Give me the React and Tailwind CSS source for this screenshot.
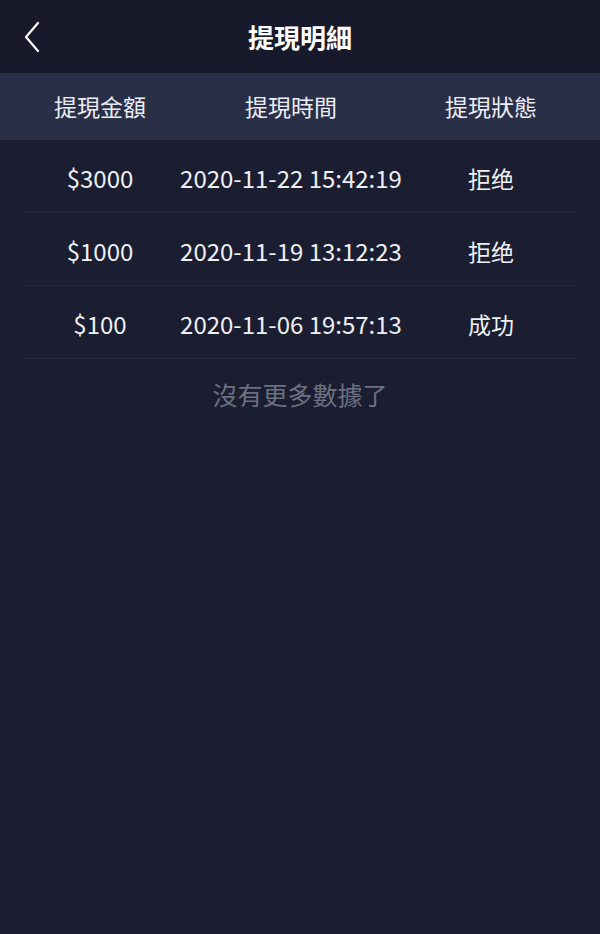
const rows = [
  { amount: '$3000', time: '2020-11-22 15:42:19', status: '拒绝' },
  { amount: '$1000', time: '2020-11-19 13:12:23', status: '拒绝' },
  { amount: '$100', time: '2020-11-06 19:57:13', status: '成功' },
];

const font = { fontFamily: '"Noto Sans CJK TC", "Noto Sans CJK SC", sans-serif' };

export default function App() {
  return (
    <div className="min-h-[934px] w-[600px] bg-[#1b1e30] text-white" style={font}>
      <div className="relative flex h-[73px] items-center justify-center bg-[#181a2c]">
        <button className="absolute left-[20px] top-[17px] p-1">
          <svg width="16" height="32" viewBox="0 0 16 32" fill="none">
            <path d="M14 2 L2 16 L14 30" stroke="#ffffff" strokeWidth="2.2" strokeLinecap="round" strokeLinejoin="round" />
          </svg>
        </button>
        <h1 className="text-[26px] font-bold">提現明細</h1>
      </div>

      <div className="flex h-[67px] items-center bg-[#2a2f48] px-6 text-[23px] text-[#eceef4]">
        <div className="w-[152px] text-center">提現金額</div>
        <div className="w-[230px] text-center">提現時間</div>
        <div className="w-[170px] text-center">提現狀態</div>
      </div>

      <div className="px-6">
        {rows.map((r, i) => (
          <div key={i} className="flex h-[73px] items-center border-b border-[#23273a] pt-[4px] text-[24px] text-[#eef0f4]">
            <div className="w-[152px] text-center">{r.amount}</div>
            <div className="w-[230px] text-center">{r.time}</div>
            <div className="w-[170px] text-center text-[23px]">{r.status}</div>
          </div>
        ))}
      </div>

      <p className="pt-[17px] text-center text-[25px] text-[#6c7080]">沒有更多數據了</p>
    </div>
  );
}
